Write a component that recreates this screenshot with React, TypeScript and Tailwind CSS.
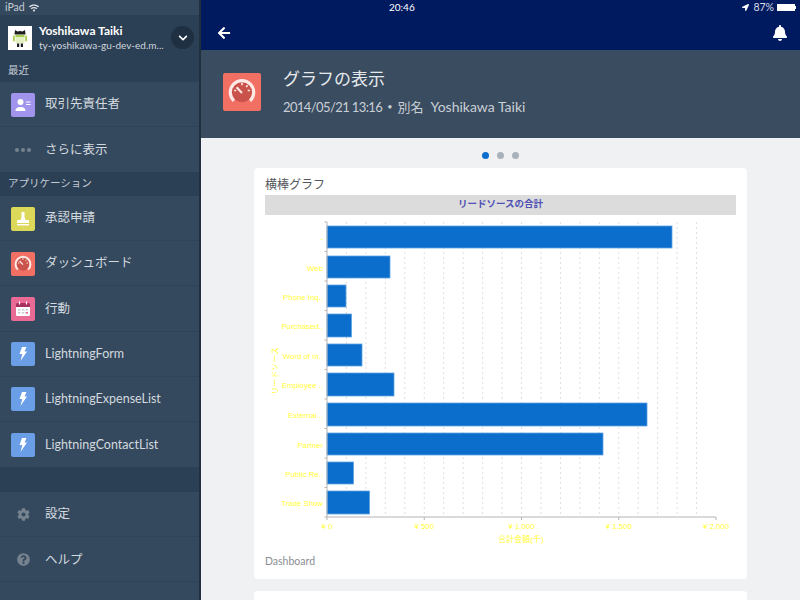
import { FaArrowLeft, FaBell, FaChevronDown, FaCog, FaLocationArrow, FaQuestionCircle, FaWifi } from "react-icons/fa";

const font = { fontFamily: '"Lato", "Noto Sans CJK JP", sans-serif' };

function IconBox({ color, children }: { color: string; children: React.ReactNode }) {
  return (
    <div className={`flex h-6 w-6 items-center justify-center rounded-[2px] ${color}`}>
      <svg viewBox="0 0 24 24" className="h-6 w-6">
        {children}
      </svg>
    </div>
  );
}

function Gauge() {
  return (
    <>
      <path d="M7.6 16.9 A6.6 6.6 0 1 1 16.4 16.9 A7 7 0 0 1 7.6 16.9 Z" fill="#c9534a" />
      <path d="M6.9 17.6 A7.4 7.4 0 1 1 17.1 17.6" fill="none" stroke="#fde9e6" strokeWidth="2" />
      <path d="M12 12.6 L8.6 9" stroke="#fde9e6" strokeWidth="1.3" />
      <path d="M12 6.2v1.6M7 11h1.4M15.6 11H17M15.6 7.8l-1 1" stroke="#fde9e6" strokeWidth="1" />
    </>
  );
}

function Bolt() {
  return <path d="M11 5h4.5l-2 4.5H16L9.5 19l1.8-7H8.5z" fill="#fff" />;
}

function Row({ icon, label, last }: { icon: React.ReactNode; label: string; last?: boolean }) {
  return (
    <div className={`flex h-[45.2px] shrink-0 items-center gap-[10px] pl-[11px] pt-[1px] ${last ? "" : "border-b border-[#2f4358]"}`}>
      <div className="flex w-6 items-center justify-center">{icon}</div>
      <span className="text-[12.5px] text-[#d3d9df]">{label}</span>
    </div>
  );
}

const bars = [
  { label: "-", top: 226, h: 22, end: 672 },
  { label: "Web", top: 256, h: 22, end: 390 },
  { label: "Phone Inq..", top: 285, h: 22, end: 346 },
  { label: "Purchased..", top: 314, h: 23, end: 351.5 },
  { label: "Word of m..", top: 344, h: 22, end: 362 },
  { label: "Employee ..", top: 373, h: 23, end: 394 },
  { label: "External ..", top: 403, h: 23, end: 647 },
  { label: "Partner", top: 433, h: 22, end: 603 },
  { label: "Public Re..", top: 462, h: 22, end: 353.5 },
  { label: "Trade Show", top: 491, h: 23, end: 369.5 },
];

// svg origin sits at (265,215) on the page
const X0 = 62;
const STEP = 19.45;
const chartFont = { fontFamily: '"Liberation Sans", "Noto Sans CJK JP", sans-serif' };

function Chart() {
  return (
    <svg viewBox="0 0 471 335" className="block h-[335px] w-[471px]" style={chartFont}>
      {Array.from({ length: 19 }, (_, i) => (
        <line key={i} x1={X0 + STEP * (i + 1)} x2={X0 + STEP * (i + 1)} y1="7" y2="302" stroke="#dedede" strokeWidth="1" strokeDasharray="2 3" />
      ))}
      {bars.map((b) => (
        <g key={b.label}>
          <rect x={X0} y={b.top - 215} width={b.end - 265 - X0} height={b.h} fill="#0b6ecd" stroke="#5fa3e3" strokeWidth="0.8" />
          <text x="58" y={b.top - 215 + b.h / 2 + 3.5} textAnchor="end" fontSize="7.8" fill="#ffff33">
            {b.label}
          </text>
        </g>
      ))}
      <path d={`M${X0} 7V302H451`} fill="none" stroke="#b4b4b4" strokeWidth="1" />
      {Array.from({ length: 11 }, (_, i) => (
        <line key={i} x1={X0 - 2.5} x2={X0} y1={7 + 29.5 * i} y2={7 + 29.5 * i} stroke="#b4b4b4" />
      ))}
      {[0, 1, 2, 3, 4].map((i) => (
        <g key={i}>
          <line x1={X0 + STEP * 5 * i} x2={X0 + STEP * 5 * i} y1="302" y2="305" stroke="#b4b4b4" />
          <text x={X0 + STEP * 5 * i} y="314" textAnchor="middle" fontSize="7.8" fill="#ffff33">
            {["¥ 0", "¥ 500", "¥ 1,000", "¥ 1,500", "¥ 2,000"][i]}
          </text>
        </g>
      ))}
      <text x="256" y="327" textAnchor="middle" fontSize="8" fill="#ffff33">
        合計金額(千)
      </text>
      <text transform="translate(13 156) rotate(-90)" textAnchor="middle" fontSize="8" fill="#ffff33">
        リードソース
      </text>
    </svg>
  );
}

export default function App() {
  return (
    <div className="flex h-[600px] w-[800px] overflow-hidden bg-[#f0f1f3]" style={font}>
      <aside className="flex h-full w-[201px] shrink-0 flex-col overflow-hidden border-r-2 border-[#20303f] bg-[#34495e]">
        <div className="flex h-[15px] shrink-0 items-center gap-1 pl-[5px] text-[10.5px] text-[#c4ccd4]">
          iPad <FaWifi className="text-[10px] text-[#e3e7eb]" />
        </div>
        <div className="flex h-[45px] shrink-0 items-center bg-[#2b3f55] pl-2 pr-[5px]">
          <div className="h-6 w-6 shrink-0 bg-white">
            <svg viewBox="0 0 24 24" className="h-6 w-6">
              <path d="M6.5 8.5 L7 4 L9.5 5.5 A6 6 0 0 1 14.5 5.5 L17 4 L17.5 8.5 Z" fill="#1d1d1d" />
              <rect x="7.5" y="9" width="9" height="8.5" rx="1" fill="#e4efc4" />
              <rect x="7.5" y="9" width="9" height="2" fill="#a8cf4c" />
              <rect x="5" y="9.5" width="1.8" height="6" rx="0.9" fill="#a8cf4c" />
              <rect x="17.2" y="9.5" width="1.8" height="6" rx="0.9" fill="#a8cf4c" />
              <rect x="9" y="17.5" width="2.2" height="3.5" fill="#1d1d1d" />
              <rect x="12.8" y="17.5" width="2.2" height="3.5" fill="#1d1d1d" />
            </svg>
          </div>
          <div className="ml-[7px] min-w-0 flex-1">
            <div className="text-[12px] leading-[14px] font-bold text-white">Yoshikawa Taiki</div>
            <div className="truncate text-[10px] leading-[14px] text-[#d0d6dc]">ty-yoshikawa-gu-dev-ed.m...</div>
          </div>
          <div className="flex h-[23px] w-[23px] shrink-0 items-center justify-center rounded-full bg-[#1f3043]">
            <FaChevronDown className="text-[10px] text-white" />
          </div>
        </div>
        <div className="flex h-[22px] shrink-0 items-center bg-[#2b3f55] pl-2 text-[10.5px] text-[#c5ccd4]">最近</div>
        <Row
          label="取引先責任者"
          icon={
            <IconBox color="bg-[#a094ed]">
              <circle cx="9.5" cy="9" r="3" fill="#fff" />
              <path d="M4.5 18c0-3 2-4 5-4s5 1 5 4z" fill="#fff" />
              <path d="M15 9h4.5M15 11.5h4.5" stroke="#fff" strokeWidth="1" />
            </IconBox>
          }
        />
        <Row
          last
          label="さらに表示"
          icon={
            <div className="flex gap-[2px]">
              <span className="h-1 w-1 rounded-full bg-[#76838f]" />
              <span className="h-1 w-1 rounded-full bg-[#76838f]" />
              <span className="h-1 w-1 rounded-full bg-[#76838f]" />
            </div>
          }
        />
        <div className="flex h-[23.6px] shrink-0 items-center bg-[#2b3f55] pl-2 text-[10.5px] text-[#c5ccd4]">アプリケーション</div>
        <Row
          label="承認申請"
          icon={
            <IconBox color="bg-[#dcd85a]">
              <path d="M10.5 5h3v5l1 3h-5l1-3z" fill="#fff" />
              <rect x="6" y="13" width="12" height="3" rx="0.5" fill="#fff" />
              <rect x="6" y="17" width="12" height="1.4" fill="#fff" />
            </IconBox>
          }
        />
        <Row
          label="ダッシュボード"
          icon={
            <IconBox color="bg-[#f26f64]">
              <Gauge />
            </IconBox>
          }
        />
        <Row
          label="行動"
          icon={
            <IconBox color="bg-[#e96a95]">
              <rect x="5" y="6" width="14" height="13" rx="1" fill="#fff" />
              <path d="M5 7a1 1 0 0 1 1-1h12a1 1 0 0 1 1 1v3H5z" fill="#a8305f" />
              <path d="M8.5 4.5v3M15.5 4.5v3" stroke="#fff" strokeWidth="1.2" />
              <path d="M7 12h2.4v1.6H7zM10.8 12h2.4v1.6h-2.4zM14.6 12H17v1.6h-2.4zM7 15h2.4v1.6H7zM10.8 15h2.4v1.6h-2.4z" fill="#c9ccd2" />
              <path d="M14.6 15H17v1.6h-2.4z" fill="#e96a95" />
            </IconBox>
          }
        />
        {["LightningForm", "LightningExpenseList"].map((l) => (
          <Row
            key={l}
            label={l}
            icon={
              <IconBox color="bg-[#6a9ee6]">
                <Bolt />
              </IconBox>
            }
          />
        ))}
        <Row
          last
          label="LightningContactList"
          icon={
            <IconBox color="bg-[#6a9ee6]">
              <Bolt />
            </IconBox>
          }
        />
        <div className="h-[25px] shrink-0 bg-[#2b3f55]" />
        <Row label="設定" icon={<FaCog className="text-[13px] text-[#76838f]" />} />
        <Row label="ヘルプ" icon={<FaQuestionCircle className="text-[13px] text-[#76838f]" />} />
      </aside>

      <main className="flex min-w-0 flex-1 flex-col">
        <div className="h-[50px] shrink-0 bg-[#001a5f]">
          <div className="flex h-[15px] items-center pr-[4px] text-[10.5px] text-[#d8dde6]">
            <span className="ml-[188px] text-[10px] text-white">20:46</span>
            <FaLocationArrow className="ml-auto text-[7px] text-white" />
            <span className="ml-[4px]">87%</span>
            <span className="ml-[3px] flex h-[7px] w-[18px] border border-white bg-white" />
            <span className="h-[3px] w-[1px] bg-white" />
          </div>
          <div className="flex h-[35px] items-center justify-between px-[16px] text-white">
            <FaArrowLeft className="text-[14px]" />
            <FaBell className="mr-[-4px] text-[16px]" />
          </div>
        </div>
        <div className="flex h-[88px] shrink-0 items-center bg-[#3a4c5f] pb-[4px] pl-[22px]">
          <div className="flex h-[38px] w-[38px] items-center justify-center rounded-[2px] bg-[#f26f64]">
            <svg viewBox="0 0 24 24" className="h-[38px] w-[38px]">
              <Gauge />
            </svg>
          </div>
          <div className="ml-[22px]">
            <div className="text-[17px] leading-6 text-[#e6e9ec]">グラフの表示</div>
            <div className="mt-[6px] flex items-center text-[13px] leading-5 text-[#c9cfd6]">
              <span className="tracking-[-0.6px]">2014/05/21 13:16</span>
              <span className="mx-[5px] text-[9px]">•</span>
              <span>別名</span>
              <span className="ml-[7px] text-[14px]">Yoshikawa Taiki</span>
            </div>
          </div>
        </div>
        <div className="flex h-[30px] shrink-0 items-center justify-center gap-2 pt-[4px]">
          <span className="h-[7px] w-[7px] rounded-full bg-[#0b6ecd]" />
          <span className="h-[7px] w-[7px] rounded-full bg-[#a9b2bb]" />
          <span className="h-[7px] w-[7px] rounded-full bg-[#a9b2bb]" />
        </div>
        <div className="mx-auto flex w-[493px] shrink-0 flex-col gap-3">
          <div className="rounded-[4px] bg-white px-[11px] pt-[9px]">
            <div className="h-[18px] text-[12px] leading-4 text-[#54585c]">横棒グラフ</div>
            <div className="flex h-5 items-center justify-center bg-[#dcdcdc] pb-[1px] text-[9.5px] font-bold text-[#5050b4]">リードソースの合計</div>
            <Chart />
            <div className="h-[29px] pt-[4px] text-[10.5px] text-[#8a8e92]">Dashboard</div>
          </div>
          <div className="h-10 rounded-[4px] bg-white" />
        </div>
      </main>
    </div>
  );
}
